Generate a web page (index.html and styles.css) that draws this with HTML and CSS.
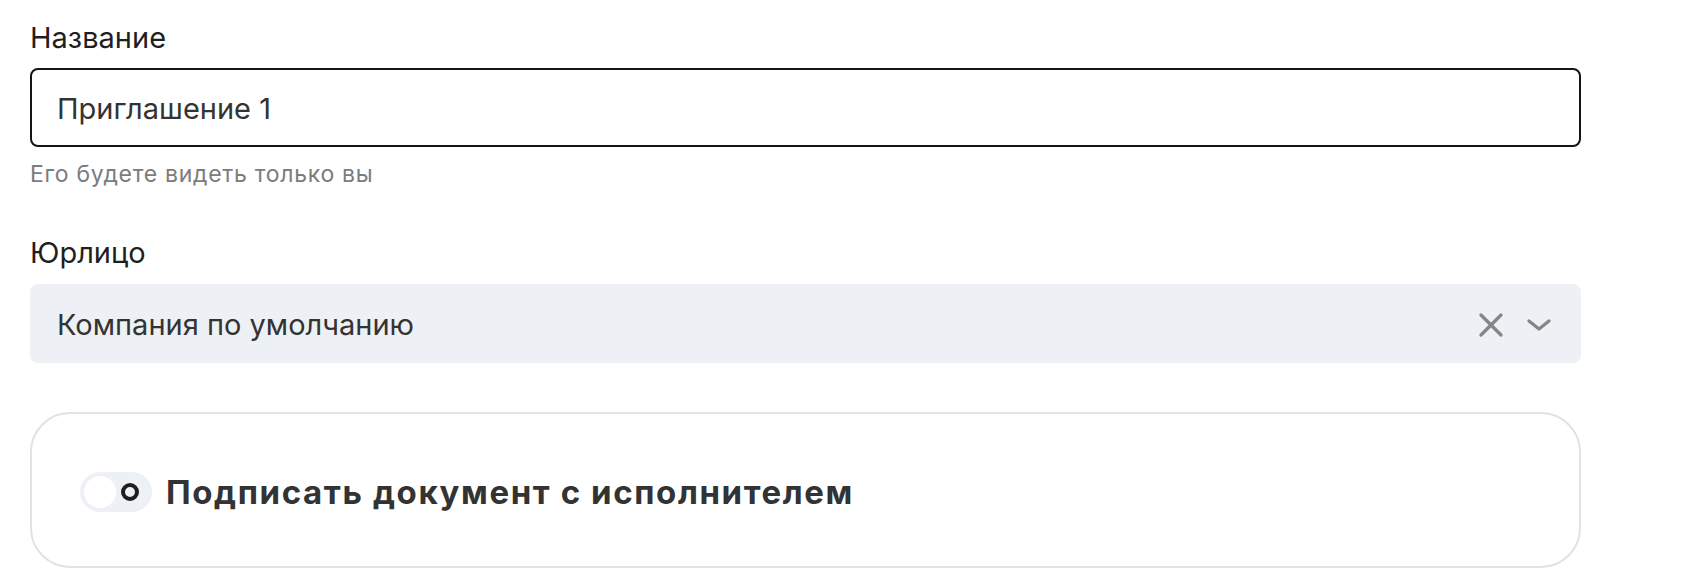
FILE: index.html
```html
<!DOCTYPE html>
<html lang="ru">
<head>
<meta charset="utf-8">
<link rel="stylesheet" href="styles.css">
</head>
<body>
<div class="form">
  <div class="field">
    <label class="label">Название</label>
    <div class="input">Приглашение 1</div>
    <div class="hint">Его будете видеть только вы</div>
  </div>
  <div class="field field-select">
    <label class="label">Юрлицо</label>
    <div class="select">
      <span class="select-value">Компания по умолчанию</span>
      <span class="select-icons">
        <svg class="icon-x" width="24" height="24" viewBox="0 0 24 24"><path d="M2 2 L22 22 M22 2 L2 22" stroke="#858585" stroke-width="3.2" stroke-linecap="round" fill="none"/></svg>
        <svg class="icon-chev" width="24" height="12" viewBox="0 0 24 12"><path d="M2 2 L12 10 L22 2" stroke="#858585" stroke-width="3.2" stroke-linecap="round" stroke-linejoin="round" fill="none"/></svg>
      </span>
    </div>
  </div>
  <div class="card">
    <div class="toggle">
      <span class="knob"></span>
      <span class="ring"></span>
    </div>
    <div class="card-title">Подписать документ с исполнителем</div>
  </div>
</div>
</body>
</html>
```

FILE: styles.css
```css
html, body {
  margin: 0;
  padding: 0;
  background: #ffffff;
}
body {
  font-family: Inter, "Noto Sans", "Liberation Sans", sans-serif;
  color: #222222;
}
.form {
  width: 1551px;
  padding: 20px 0 0 30px;
  display: flex;
  flex-direction: column;
}
.field {
  display: flex;
  flex-direction: column;
}
.label {
  font-size: 29px;
  line-height: 36px;
  color: #1f1f1f;
}
.input {
  margin-top: 12px;
  height: 79px;
  box-sizing: border-box;
  border: 2px solid #141414;
  border-radius: 8px;
  padding: 2px 25px 0;
  display: flex;
  align-items: center;
  font-size: 29px;
  color: #333333;
}
.hint {
  margin-top: 13px;
  font-size: 23px;
  line-height: 28px;
  letter-spacing: 0.7px;
  color: #7c7c7c;
}
.field-select {
  margin-top: 47px;
}
.select {
  margin-top: 13px;
  height: 79px;
  box-sizing: border-box;
  background: #edf0f4;
  border-radius: 8px;
  padding: 2px 30px 0 27px;
  display: flex;
  align-items: center;
  justify-content: space-between;
  font-size: 29px;
  color: #333333;
}
.select-icons {
  display: flex;
  align-items: center;
  gap: 24px;
}
.icon-x, .icon-chev {
  display: block;
}
.card {
  margin-top: 49px;
  height: 156px;
  box-sizing: border-box;
  border: 2px solid #e2e2e2;
  border-radius: 40px;
  padding: 4px 48px 0;
  display: flex;
  align-items: center;
  gap: 14px;
}
.toggle {
  position: relative;
  width: 72px;
  height: 40px;
  border-radius: 20px;
  background: #edf0f4;
  flex: none;
}
.knob {
  position: absolute;
  left: 4px;
  top: 4px;
  width: 32px;
  height: 32px;
  border-radius: 50%;
  background: #ffffff;
}
.ring {
  position: absolute;
  left: 41px;
  top: 11px;
  width: 18px;
  height: 18px;
  box-sizing: border-box;
  border: 4px solid #1e1e1e;
  border-radius: 50%;
}
.card-title {
  font-size: 33px;
  font-weight: 700;
  letter-spacing: 1.6px;
  color: #333333;
}
```
